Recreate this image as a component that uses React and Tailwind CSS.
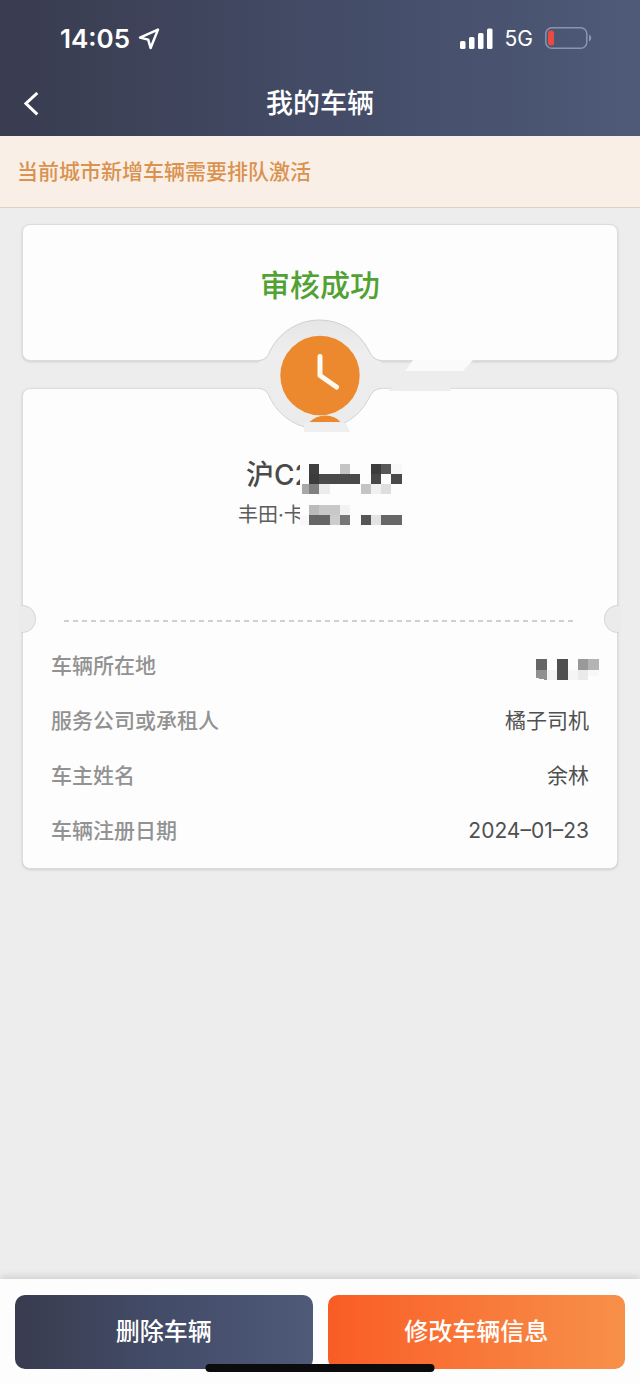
import React from "react";

const details = [
  { label: "车辆所在地", value: null },
  { label: "服务公司或承租人", value: "橘子司机" },
  { label: "车主姓名", value: "余林" },
  { label: "车辆注册日期", value: "2024–01–23" },
];

// Each cell: [x, y, width, height, fill]
const plateCells = [
  [9, 0, 10, 10, "#3f3f3f"],
  [40, 0, 10, 10, "#c4c4c4"],
  [71, 0, 10, 10, "#3c3c3c"],
  [81, 0, 10, 10, "#585858"],
  [91, 0, 11, 10, "#f8f8f8"],
  [9, 10, 10, 10, "#3c3c3c"],
  [19, 10, 41, 10, "#4a4a4a"],
  [71, 10, 10, 10, "#484848"],
  [91, 10, 11, 10, "#4a4a4a"],
  [2, 20, 7, 10, "#a8a8a8"],
  [9, 20, 10, 10, "#808080"],
  [19, 20, 11, 10, "#ececec"],
  [61, 20, 10, 10, "#c4c4c4"],
  [71, 20, 10, 10, "#f0f0f0"],
  [81, 20, 10, 10, "#dedede"],
];

const modelCells = [
  [9, 0, 10, 10, "#bbbbbb"],
  [19, 0, 21, 10, "#c8c8c8"],
  [40, 0, 10, 10, "#f3f3f3"],
  [0, 10, 9, 10, "#f8f8f8"],
  [9, 10, 21, 10, "#666666"],
  [30, 10, 10, 10, "#cccccc"],
  [40, 10, 10, 10, "#777777"],
  [61, 10, 10, 10, "#555555"],
  [71, 10, 10, 10, "#e3e3e3"],
  [81, 10, 21, 10, "#676767"],
];

const placeCells = [
  [0, 0, 11, 11, "#666666"],
  [21, 0, 11, 21, "#505050"],
  [42, 0, 10, 11, "#999999"],
  [52, 0, 11, 11, "#b4b4b4"],
  [11, 11, 10, 10, "#f3f3f3"],
  [32, 11, 10, 10, "#f5f5f5"],
  [42, 11, 10, 10, "#eaeaea"],
  [52, 11, 11, 6, "#f8f8f8"],
];

function Mosaic({ cells, width, height, children }) {
  return (
    <svg
      width={width}
      height={height}
      shapeRendering="crispEdges"
      className="relative shrink-0 bg-[#fdfdfd]"
      aria-hidden="true"
    >
      {cells.map(([x, y, w, h, fill]) => (
        <rect key={`${x}-${y}`} x={x} y={y} width={w} height={h} fill={fill} />
      ))}
      {children}
    </svg>
  );
}

function StatusBar() {
  return (
    <div className="flex h-[76px] items-center justify-between pr-12 pl-[60px]">
      <div className="flex items-center gap-2 pt-0.5">
        <span className="text-[26px] leading-8 font-semibold">14:05</span>
        <svg width="22" height="22" viewBox="0 0 22 22" fill="none" aria-hidden="true">
          <path
            d="M20 1.6 2 9.6l8.2 2L12.6 20Z"
            stroke="currentColor"
            strokeWidth="2.5"
            strokeLinejoin="round"
          />
        </svg>
      </div>
      <div className="flex items-center gap-3">
        <svg width="33" height="21" viewBox="0 0 33 21" fill="currentColor" aria-hidden="true">
          <rect x="0" y="13" width="5.5" height="8" rx="1.5" />
          <rect x="9" y="9" width="5.5" height="12" rx="1.5" />
          <rect x="18" y="5" width="5.5" height="16" rx="1.5" />
          <rect x="27" y="0.5" width="5.5" height="20.5" rx="1.5" />
        </svg>
        <span className="pt-0.5 text-[21px] leading-8">5G</span>
        <svg width="47" height="22" viewBox="0 0 47 22" fill="none" aria-hidden="true">
          <rect x="0.8" y="0.8" width="41" height="20.4" rx="6" stroke="#8c93ae" strokeWidth="1.5" />
          <rect x="3" y="3.5" width="6" height="15" rx="2.5" fill="#ea4a43" />
          <path d="M44 7.5c3 1.5 3 5.5 0 7Z" fill="#8c93ae" />
        </svg>
      </div>
    </div>
  );
}

function StatusBadge() {
  return (
    <svg
      width="320"
      height="116"
      viewBox="160 318 320 116"
      fill="none"
      className="absolute -top-[43px] left-1/2 -translate-x-1/2"
      aria-hidden="true"
    >
      <defs>
        <linearGradient id="well" x1="0" y1="0" x2="0" y2="1">
          <stop offset="0" stopColor="#e6e6e6" />
          <stop offset="0.3" stopColor="#eeeeee" />
          <stop offset="1" stopColor="#ebebeb" />
        </linearGradient>
      </defs>
      <path
        d="M259 360.5Q267 360.5 270.5 350A55 55 0 0 1 368.5 350Q373 360.5 381 360.5V388.5Q373 388.5 368.5 399A55 55 0 0 1 270.5 399Q267 388.5 259 388.5Z"
        fill="url(#well)"
      />
      <path
        d="M259 360.5Q267 360.5 270.5 350A55 55 0 0 1 368.5 350Q373 360.5 381 360.5"
        stroke="#cfcfd1"
      />
      <path
        d="M259 388.5Q267 388.5 270.5 399A55 55 0 0 0 368.5 399Q373 388.5 381 388.5"
        stroke="#d3d3d5"
      />
      <circle cx="320" cy="375.5" r="39.7" fill="#ec892e" />
      <path
        d="M320 356.5V375.5L336.5 387"
        stroke="#fffaf0"
        strokeWidth="5"
        strokeLinecap="round"
        strokeLinejoin="round"
      />
      <path d="M309.5 422Q316 415.5 325.5 415.5T340.5 422Z" fill="#ec892e" />
      <path d="M304 423H346L350 432H304Z" fill="#efefef" />
      <path d="M413 360H473L463 371H405Z" fill="#fafafa" />
      <path d="M405 371H451V391H388Q397 385 405 371Z" fill="#ededee" />
    </svg>
  );
}

export default function App() {
  return (
    <div className="flex min-h-screen flex-col bg-[#ededed] font-[Inter,'Noto_Sans_CJK_SC',sans-serif]">
      <header className="bg-linear-to-r from-[#393c4f] via-[#434b66] to-[#4e5a78] text-white">
        <StatusBar />
        <div className="grid h-[60px] grid-cols-[64px_1fr_64px] items-center pb-1">
          <button type="button" aria-label="返回" className="flex h-12 items-center pl-6">
            <svg width="15" height="24" viewBox="0 0 15 24" fill="none" aria-hidden="true">
              <path d="M13.3 1 2 11.5l11.3 10.8" stroke="currentColor" strokeWidth="3" />
            </svg>
          </button>
          <h1 className="text-center text-[27px] leading-9 font-medium">我的车辆</h1>
        </div>
      </header>

      <p className="border-b border-[#e2d0bd] bg-[#f9efe6] px-[17px] py-5 text-[21px] leading-[31px] font-medium text-[#d9924f]">
        当前城市新增车辆需要排队激活
      </p>

      <main className="flex-1 px-[22px] pt-4 pb-4">
        <section className="h-[137px] rounded-lg border border-[#dcdcdc] bg-[#fdfdfd] pt-10 text-center shadow-sm">
          <h2 className="text-[30px] leading-10 font-medium text-[#52a133]">审核成功</h2>
        </section>

        <div className="relative z-10 h-[27px]">
          <StatusBadge />
        </div>

        <section className="relative rounded-lg border border-[#dcdcdc] bg-[#fdfdfd] pt-[66px] pb-[10px] shadow-sm">
          <div className="flex h-10 items-center justify-center pl-2">
            <span className="w-[54px] text-[28px] leading-10 font-medium whitespace-nowrap text-[#4a4a4a]">
              沪C2
            </span>
            <span className="relative pt-2">
              <Mosaic cells={plateCells} width={102} height={30} />
            </span>
          </div>
          <div className="flex h-10 items-center justify-center">
            <span className="w-[62px] text-xl leading-8 whitespace-nowrap text-[#5c5c5c]">
              丰田·卡
            </span>
            <span className="relative">
              <Mosaic cells={modelCells} width={102} height={20} />
            </span>
          </div>

          <div className="mt-[70px] flex h-7 items-center justify-between">
            <span className="-ml-0.5 h-7 w-[15px] rounded-r-full border border-l-0 border-[#d8d8d8] bg-[#ebebeb]" />
            <span className="mx-7 mt-1 h-0.5 flex-1 bg-[repeating-linear-gradient(90deg,#d0d0d0_0_5px,transparent_5px_9px)]" />
            <span className="-mr-0.5 h-7 w-[15px] rounded-l-full border border-r-0 border-[#d8d8d8] bg-[#ebebeb]" />
          </div>

          <dl className="mt-[5px] px-7 text-[21px] leading-8">
            {details.map(({ label, value }) => (
              <div key={label} className="flex h-[55px] items-center justify-between">
                <dt className="font-medium text-[#929292]">{label}</dt>
                <dd className="text-[#505050]">
                  {value ?? (
                    <span className="-mr-[10px] block pt-2">
                      <Mosaic cells={placeCells} width={63} height={21}>
                        <path d="M0 11H11V21L0 19Z" fill="#909090" />
                      </Mosaic>
                    </span>
                  )}
                </dd>
              </div>
            ))}
          </dl>
        </section>
      </main>

      <footer className="relative bg-[#fdfdfd] px-[15px] pt-4 pb-[15px] shadow-[0_-2px_8px_rgba(0,0,0,0.14)]">
        <div className="grid grid-cols-2 gap-[15px] text-2xl font-medium text-white">
          <button
            type="button"
            className="h-[74px] rounded-[10px] bg-linear-to-r from-[#393c4f] via-[#434c69] to-[#4e5a78]"
          >
            删除车辆
          </button>
          <button
            type="button"
            className="h-[74px] rounded-[10px] bg-linear-to-r from-[#f95c25] to-[#f79049]"
          >
            修改车辆信息
          </button>
        </div>
        {/* Home indicator */}
        <div className="absolute bottom-3 left-1/2 h-2 w-[229px] -translate-x-1/2 rounded-full bg-[#0b0b0d]" />
      </footer>
    </div>
  );
}
